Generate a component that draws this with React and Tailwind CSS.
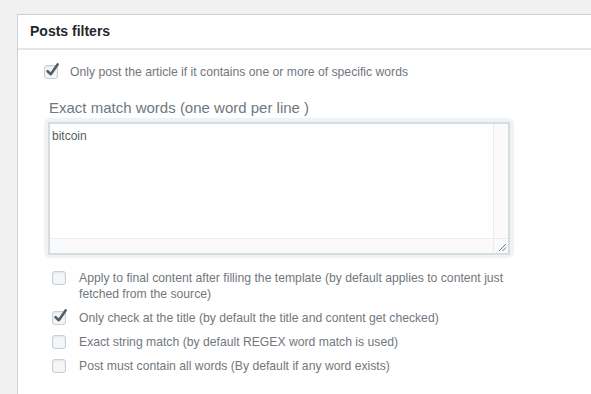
import React from "react";

const Checkbox = ({ checked }) => (
  <span className="relative block w-[14px] h-[14px] shrink-0 rounded-[3px] border border-[#c9d0d5] bg-[#f4f6f7] shadow-[inset_0_1px_2px_rgba(0,0,0,0.08)]">
    {checked && (
      <svg
        className="absolute left-[0px] top-[-4px] overflow-visible"
        width="16"
        height="16"
        viewBox="0 0 16 16"
      >
        <path
          d="M2.6 9.2 L5.8 12.2 L12.6 2.4"
          fill="none"
          stroke="#555d64"
          strokeWidth="2.6"
          strokeLinecap="round"
          strokeLinejoin="round"
        />
      </svg>
    )}
  </span>
);

const options = [
  {
    label:
      "Apply to final content after filling the template (by default applies to content just fetched from the source)",
    checked: false,
  },
  {
    label: "Only check at the title (by default the title and content get checked)",
    checked: true,
  },
  { label: "Exact string match (by default REGEX word match is used)", checked: false },
  { label: "Post must contain all words (By default if any word exists)", checked: false },
];

export default function App() {
  return (
    <div className="w-[591px] h-[394px] overflow-hidden bg-[#f1f1f1] pt-[14px] pl-[17px] font-['Liberation_Sans',Arial,sans-serif]">
      <div className="h-[400px] bg-white border-l border-t border-[#cdd0d4]">
        <div className="h-[35px] flex items-center px-[12px] border-b-2 border-[#e4e6e8]">
          <span className="text-[14px] font-bold text-[#23282d]">Posts filters</span>
        </div>

        <div className="pt-[14px]">
          <div className="flex items-center h-[16px] pl-[26px] gap-[12px]">
            <Checkbox checked />
            <span className="text-[12.2px] leading-[16px] text-[#72777c]">
              Only post the article if it contains one or more of specific words
            </span>
          </div>

          <div className="mt-[18px] pl-[31px] text-[15px] leading-[20px] text-[#6f787e]">
            Exact match words (one word per line )
          </div>

          <div className="mt-0 ml-[26px] w-[470px] p-[4px] pb-[3px] rounded-[6px] bg-[#eff3f6]">
            <div className="h-[133px] flex flex-col border-2 border-[#d6dde1] bg-white">
              <div className="flex flex-1">
                <div className="flex-1 px-[2px] pt-[4px] text-[12px] leading-[16px] text-[#555c62]">
                  bitcoin
                </div>
                <div className="w-[15px] border-l border-[#ececec] bg-[#fafafa]" />
              </div>
              <div className="flex h-[15px] border-t border-[#ececec] bg-[#fafafa]">
                <div className="flex-1" />
                <div className="relative w-[15px] border-l border-[#ececec]">
                  <svg className="absolute right-[1px] bottom-[1px]" width="10" height="10" viewBox="0 0 10 10">
                    <path d="M9 2 L2 9 M9 5.5 L5.5 9" stroke="#777" strokeWidth="1" />
                  </svg>
                </div>
              </div>
            </div>
          </div>

          <div className="mt-[12px] pl-[34px] flex flex-col gap-[8px]">
            {options.map((o) => (
              <div key={o.label} className="flex items-start gap-[13px]">
                <span className="flex mt-[1px]">
                  <Checkbox checked={o.checked} />
                </span>
                <span className="w-[440px] text-[12.2px] leading-[16px] text-[#72777c]">
                  {o.label}
                </span>
              </div>
            ))}
          </div>
        </div>
      </div>
    </div>
  );
}
